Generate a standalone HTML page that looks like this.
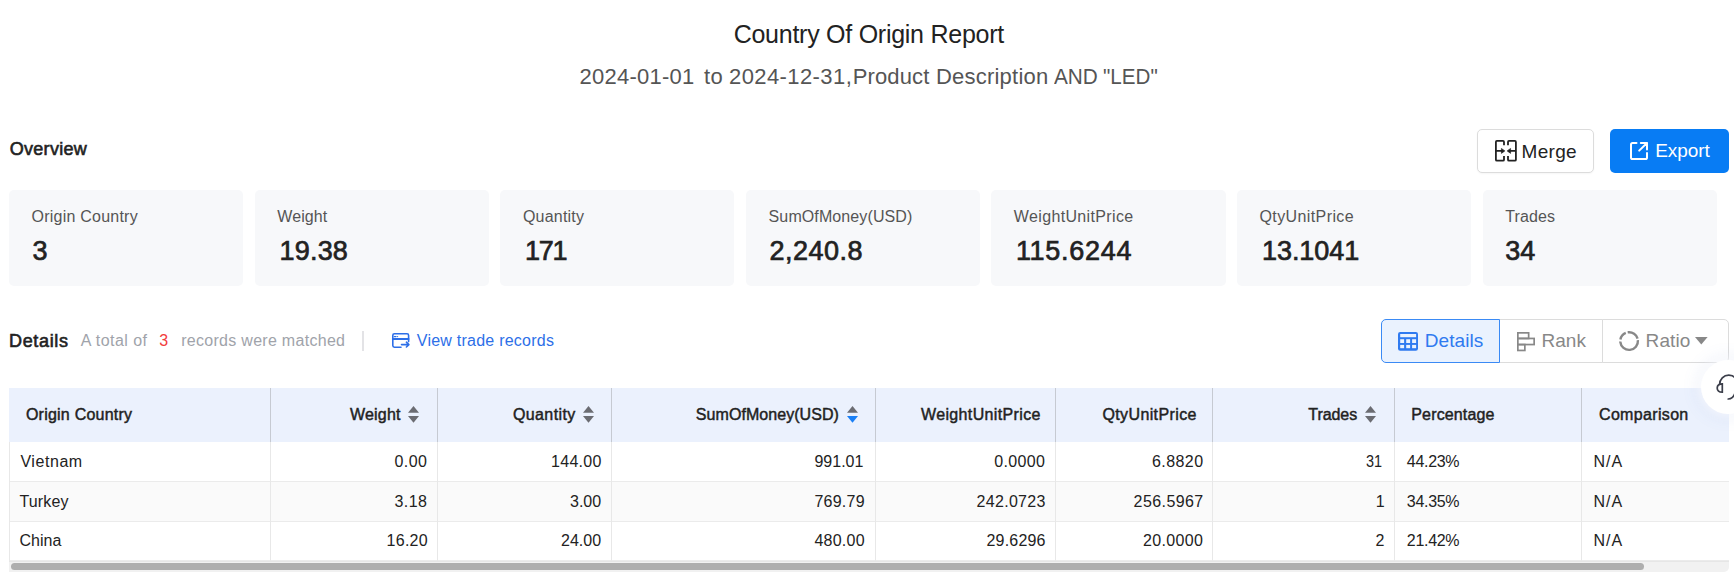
<!DOCTYPE html>
<html><head><meta charset="utf-8">
<style>
*{box-sizing:border-box;margin:0;padding:0}
html,body{width:1734px;height:585px;overflow:hidden;background:#fff;font-family:"Liberation Sans",sans-serif;color:#222}
.a{position:absolute;white-space:nowrap}
.tt{font-size:25px;line-height:28px;color:#222}
.sb{font-size:22px;line-height:28px;color:#555}
.ov{font-size:18px;font-weight:normal;line-height:22px;color:#222;-webkit-text-stroke:0.6px #222}
.btn{position:absolute;top:129px;height:44px;border-radius:5px;font-size:19px;line-height:44px}
#merge{left:1477px;width:117px;border:1px solid #dcdcdc;background:#fff;color:#222;box-shadow:0 1px 2px rgba(0,0,0,.04)}
#export{left:1610px;width:119px;background:#087cf4;color:#fff}
.card{position:absolute;top:190px;height:96px;width:234.3px;background:#f7f8fa;border-radius:5px}
.lb{font-size:16px;line-height:20px;color:#555}
.vl{font-size:27px;line-height:30px;font-weight:normal;color:#222;-webkit-text-stroke:0.7px #222}
.tot{font-size:16px;line-height:22px;color:#a0a3aa}
.seg{position:absolute;top:319px;height:44px;border:1px solid #dcdcdc;background:#fff;color:#888}
.sgt{font-size:19px;line-height:42px}
#sd{left:1381px;width:119px;border-color:#3a8af5;background:#eaf2fe;color:#2f7af0;border-radius:5px 0 0 5px;z-index:2}
#sr{left:1499px;width:104px}
#sq{left:1602px;width:127px;border-radius:0 5px 5px 0}
#tbl{position:absolute;left:9px;top:388px;width:1720px;height:184px;overflow:hidden}
.hd{position:absolute;left:0;top:0;height:54.5px;width:1720px;background:#ebf1fd}
.row{position:absolute;left:0;width:1720px;border-bottom:1px solid #ebebeb;background:#fff}
.vl2{position:absolute;width:1px;background:#e8e8e8}
.ht{font-size:16px;font-weight:normal;line-height:54px;color:#222;-webkit-text-stroke:0.45px #222}
.si{position:absolute;top:18px}
.ct{font-size:16px;line-height:39px;color:#222}
#track{position:absolute;left:0;top:173px;width:1720px;height:11px;background:#f1f1f1;border-top:1px solid #e6e6e6;border-radius:0 0 5px 0}
#thumb{position:absolute;left:2px;top:175px;width:1633px;height:7px;background:#aeaeae;border-radius:4px}
#fab{left:1701px;top:360px;width:54px;height:54px;border-radius:50%;background:#fff;box-shadow:0 0 8px 3px rgba(255,255,255,.6),0 0 18px 2px rgba(90,120,210,.13)}
svg{position:absolute;overflow:visible}
</style></head><body>
<span id="t1" class="a tt" style="left:733.7px;top:19.5px;letter-spacing:-0.261px">Country Of Origin Report</span>
<span id="t2" class="a sb" style="left:579.4px;top:63px;letter-spacing:0.264px">2024-01-01</span>
<span id="t3" class="a sb" style="left:704.0px;top:63px;letter-spacing:0.4px">to</span>
<span id="t4" class="a sb" style="left:729.0px;top:63px;letter-spacing:0.41px">2024-12-31,</span>
<span id="t5" class="a sb" style="left:852.7px;top:63px;letter-spacing:0.122px">Product</span>
<span id="t6" class="a sb" style="left:935.9px;top:63px;letter-spacing:0.23px">Description</span>
<span id="t7" class="a sb" style="left:1054.2px;top:63px;letter-spacing:0px;transform:scaleX(0.9444);transform-origin:0 0">AND</span>
<span id="t8" class="a sb" style="left:1103.0px;top:63px;letter-spacing:0px;transform:scaleX(0.9365);transform-origin:0 0">"LED"</span>
<span id="t9" class="a ov" style="left:9.8px;top:138px;letter-spacing:0.27px">Overview</span>
<div id="merge" class="btn"><svg style="left:17px;top:10px" width="22" height="22" viewBox="0 0 22 22" fill="none" stroke="#222" stroke-width="1.8" stroke-linejoin="round"><path d="M9 5.3V1.9Q9 0.9 8 0.9H1.9Q0.9 0.9 0.9 1.9V19.7Q0.9 20.7 1.9 20.7H8Q9 20.7 9 19.7V16.1"/><path d="M13 5.3V1.9Q13 0.9 14 0.9H19.9Q20.9 0.9 20.9 1.9V19.7Q20.9 20.7 19.9 20.7H14Q13 20.7 13 19.7V16.1"/><path d="M0.9 10.9H7M20.9 10.9H15"/><path d="M9.9 10.9L6.4 8.4V13.4Z M12.1 10.9L15.6 8.4V13.4Z" fill="#222" stroke-width="0.6"/></svg><span id="t10" class="a " style="left:43.6px;top:-0.5px;letter-spacing:0.275px">Merge</span></div>
<div id="export" class="btn"><svg style="left:20px;top:13px" width="18" height="18" viewBox="0 0 18 18" fill="none" stroke="#fff" stroke-width="2" stroke-linecap="round" stroke-linejoin="round"><path d="M6.5 1H2.6Q1 1 1 2.6V15.4Q1 17 2.6 17H15.4Q17 17 17 15.4V11"/><path d="M9.2 8.6L17 1M10.8 1H17V7.5"/></svg><span id="t11" class="a " style="left:45.3px;top:0px;letter-spacing:-0.1px">Export</span></div>
<div class="card" style="left:9.0px"></div>
<span id="t12" class="a lb" style="left:31.6px;top:207px;letter-spacing:0.225px">Origin Country</span>
<span id="t13" class="a vl" style="left:32.6px;top:236px;letter-spacing:0px">3</span>
<div class="card" style="left:254.6px"></div>
<span id="t14" class="a lb" style="left:277.31px;top:207px;letter-spacing:0.1px">Weight</span>
<span id="t15" class="a vl" style="left:279.5px;top:236px;letter-spacing:0.2px">19.38</span>
<div class="card" style="left:500.2px"></div>
<span id="t16" class="a lb" style="left:522.9px;top:207px;letter-spacing:0.222px">Quantity</span>
<span id="t17" class="a vl" style="left:524.9px;top:236px;letter-spacing:-1.2px">171</span>
<div class="card" style="left:745.8px"></div>
<span id="t18" class="a lb" style="left:768.6px;top:207px;letter-spacing:0.107px">SumOfMoney(USD)</span>
<span id="t19" class="a vl" style="left:769.5px;top:236px;letter-spacing:0.47px">2,240.8</span>
<div class="card" style="left:991.4px"></div>
<span id="t20" class="a lb" style="left:1013.8px;top:207px;letter-spacing:0.355px">WeightUnitPrice</span>
<span id="t21" class="a vl" style="left:1015.9px;top:236px;letter-spacing:0.714px">115.6244</span>
<div class="card" style="left:1237.0px"></div>
<span id="t22" class="a lb" style="left:1259.5px;top:207px;letter-spacing:0.397px">QtyUnitPrice</span>
<span id="t23" class="a vl" style="left:1262.0px;top:236px;letter-spacing:-0.063px">13.1041</span>
<div class="card" style="left:1482.6px"></div>
<span id="t24" class="a lb" style="left:1505.2px;top:207px;letter-spacing:0.14px">Trades</span>
<span id="t25" class="a vl" style="left:1505.3px;top:236px;letter-spacing:-0.1px">34</span>
<span id="t26" class="a ov" style="left:9.0px;top:330px;letter-spacing:0.667px">Details</span>
<span id="t27" class="a tot" style="left:80.7px;top:330px;letter-spacing:0.451px">A total of</span>
<span id="t28" class="a tot" style="left:159.31px;top:330px;letter-spacing:0px;color:#f23c3c">3</span>
<span id="t29" class="a tot" style="left:181.21px;top:330px;letter-spacing:0.288px">records were matched</span>
<div class="a" style="left:362px;top:331px;width:2px;height:20px;background:#e3e3e6"></div>
<svg style="left:392px;top:333px" width="18" height="15" viewBox="0 0 18 15" fill="none" stroke="#2d6fe8" stroke-width="1.6" stroke-linecap="round" stroke-linejoin="round"><path d="M16.6 8.6V2.4Q16.6 0.8 15 0.8H2.4Q0.8 0.8 0.8 2.4V12.6Q0.8 14.2 2.4 14.2H9"/><path d="M0.8 6H16.6" stroke-width="1.8"/><path d="M2.3 3.6H4.1" stroke-width="1.1"/><circle cx="5.6" cy="3.6" r="0.65" fill="#2d6fe8" stroke="none"/><path d="M9.5 11.6H16.9M14.4 9.2L16.9 11.6L14.4 14"/></svg>
<span id="t30" class="a tot" style="left:416.81px;top:330px;letter-spacing:0.235px;color:#2d6fe8">View trade records</span>
<div id="sd" class="seg"><svg style="left:16px;top:12px" width="20" height="19" viewBox="0 0 20 19"><rect x="0" y="0" width="20" height="18.7" rx="2.2" fill="#2f7af0"/><g fill="#eaf2fe"><rect x="2.2" y="2" width="15.9" height="3.2"/><rect x="2.2" y="7.2" width="3.9" height="3.8"/><rect x="8.2" y="7.2" width="3.9" height="3.8"/><rect x="14.1" y="7.2" width="4" height="3.8"/><rect x="2.2" y="12.9" width="3.9" height="3.3"/><rect x="8.2" y="12.9" width="3.9" height="3.3"/><rect x="14.1" y="12.9" width="4" height="3.3"/></g></svg><span id="t31" class="a sgt" style="left:42.8px;top:0px;letter-spacing:0.064px">Details</span></div>
<div id="sr" class="seg"><svg style="left:17px;top:11.5px" width="19" height="20" viewBox="0 0 19 20" fill="none" stroke="#888" stroke-width="1.7"><rect x="0.85" y="0.85" width="10.8" height="5.6"/><rect x="0.85" y="6.45" width="16.3" height="6.1"/><rect x="0.85" y="12.55" width="7" height="5.9"/></svg><span id="t32" class="a sgt" style="left:41.4px;top:0px;letter-spacing:0.07px">Rank</span></div>
<div id="sq" class="seg"><svg style="left:16px;top:11px" width="21" height="21" viewBox="0 0 21 21" fill="none" stroke="#888" stroke-width="2.4"><circle cx="10.1" cy="10.05" r="8.85" stroke-dasharray="28.11 2 8.73 2 12.74 2" transform="rotate(-5.5 10.1 10.05)"/></svg><span id="t33" class="a sgt" style="left:42.6px;top:0px;letter-spacing:0.075px">Ratio</span><svg style="left:92px;top:17px" width="13" height="8" viewBox="0 0 13 8"><path d="M0 0H12.6L6.3 7.5Z" fill="#888"/></svg></div>
<div id="tbl">
 <div class="hd"></div>
 <div class="row" style="top:54px;height:40px"></div>
 <div class="row" style="top:94px;height:40px;background:#fafafa"></div>
 <div class="row" style="top:134px;height:39px"></div>
 <div class="vl2" style="left:261px;top:0;height:54px;background:#c6cad2"></div>
 <div class="vl2" style="left:261px;top:54px;height:119px"></div>
 <div class="vl2" style="left:428px;top:0;height:54px;background:#c6cad2"></div>
 <div class="vl2" style="left:428px;top:54px;height:119px"></div>
 <div class="vl2" style="left:602px;top:0;height:54px;background:#c6cad2"></div>
 <div class="vl2" style="left:602px;top:54px;height:119px"></div>
 <div class="vl2" style="left:866px;top:0;height:54px;background:#c6cad2"></div>
 <div class="vl2" style="left:866px;top:54px;height:119px"></div>
 <div class="vl2" style="left:1046px;top:0;height:54px;background:#c6cad2"></div>
 <div class="vl2" style="left:1046px;top:54px;height:119px"></div>
 <div class="vl2" style="left:1203px;top:0;height:54px;background:#c6cad2"></div>
 <div class="vl2" style="left:1203px;top:54px;height:119px"></div>
 <div class="vl2" style="left:1385px;top:0;height:54px;background:#c6cad2"></div>
 <div class="vl2" style="left:1385px;top:54px;height:119px"></div>
 <div class="vl2" style="left:1572px;top:0;height:54px;background:#c6cad2"></div>
 <div class="vl2" style="left:1572px;top:54px;height:119px"></div>
 <div class="vl2" style="left:0;top:54px;height:119px"></div>
 <span id="t34" class="a ht" style="left:16.9px;top:-0.4px;letter-spacing:0.237px">Origin Country</span>
 <span id="t35" class="a ht" style="left:340.9px;top:-0.4px;letter-spacing:0.22px">Weight</span>
 <span id="t36" class="a ht" style="left:503.9px;top:-0.4px;letter-spacing:0.412px">Quantity</span>
 <span id="t37" class="a ht" style="left:686.8px;top:-0.4px;letter-spacing:0.06px">SumOfMoney(USD)</span>
 <span id="t38" class="a ht" style="left:912.0px;top:-0.4px;letter-spacing:0.357px">WeightUnitPrice</span>
 <span id="t39" class="a ht" style="left:1093.4px;top:-0.4px;letter-spacing:0.388px">QtyUnitPrice</span>
 <span id="t40" class="a ht" style="left:1299.3px;top:-0.4px;letter-spacing:-0.06px">Trades</span>
 <span id="t41" class="a ht" style="left:1402.3px;top:-0.4px;letter-spacing:0.146px">Percentage</span>
 <span id="t42" class="a ht" style="left:1590.0px;top:-0.4px;letter-spacing:0.334px">Comparison</span>
 <svg class="si" style="left:399px" width="11" height="17" viewBox="0 0 11 17"><path d="M5.5 0L11 6.8H0Z" fill="#6b6c72"/><path d="M0 10H11L5.5 16.7Z" fill="#6b6c72"/></svg>
 <svg class="si" style="left:574px" width="11" height="17" viewBox="0 0 11 17"><path d="M5.5 0L11 6.8H0Z" fill="#6b6c72"/><path d="M0 10H11L5.5 16.7Z" fill="#6b6c72"/></svg>
 <svg class="si" style="left:838px" width="11" height="17" viewBox="0 0 11 17"><path d="M5.5 0L11 6.8H0Z" fill="#6b6c72"/><path d="M0 10H11L5.5 16.7Z" fill="#1a7ff5"/></svg>
 <svg class="si" style="left:1356px" width="11" height="17" viewBox="0 0 11 17"><path d="M5.5 0L11 6.8H0Z" fill="#6b6c72"/><path d="M0 10H11L5.5 16.7Z" fill="#6b6c72"/></svg>
 <span id="t43" class="a ct" style="left:11.4px;top:53.6px;letter-spacing:0.563px">Vietnam</span>
 <span id="t44" class="a ct" style="left:385.4px;top:53.6px;letter-spacing:0.47px">0.00</span>
 <span id="t45" class="a ct" style="left:542.1px;top:53.6px;letter-spacing:0.26px">144.00</span>
 <span id="t46" class="a ct" style="left:805.4px;top:53.6px;letter-spacing:0.02px">991.01</span>
 <span id="t47" class="a ct" style="left:985.3px;top:53.6px;letter-spacing:0.32px">0.0000</span>
 <span id="t48" class="a ct" style="left:1143.0px;top:53.6px;letter-spacing:0.42px">6.8820</span>
 <span id="t49" class="a ct" style="left:1357.1px;top:53.6px;letter-spacing:0px;transform:scaleX(0.9018);transform-origin:0 0">31</span>
 <span id="t50" class="a ct" style="left:1397.8px;top:53.6px;letter-spacing:-0.3px">44.23%</span>
 <span id="t51" class="a ct" style="left:1584.6px;top:53.6px;letter-spacing:0.9px">N/A</span>
 <span id="t52" class="a ct" style="left:10.4px;top:93.6px;letter-spacing:0.16px">Turkey</span>
 <span id="t53" class="a ct" style="left:385.4px;top:93.6px;letter-spacing:0.47px">3.18</span>
 <span id="t54" class="a ct" style="left:561.0px;top:93.6px;letter-spacing:0.0px">3.00</span>
 <span id="t55" class="a ct" style="left:805.4px;top:93.6px;letter-spacing:0.24px">769.79</span>
 <span id="t56" class="a ct" style="left:967.5px;top:93.6px;letter-spacing:0.317px">242.0723</span>
 <span id="t57" class="a ct" style="left:1124.6px;top:93.6px;letter-spacing:0.413px">256.5967</span>
 <span id="t58" class="a ct" style="left:1366.8px;top:93.6px;letter-spacing:0px">1</span>
 <span id="t59" class="a ct" style="left:1397.8px;top:93.6px;letter-spacing:-0.3px">34.35%</span>
 <span id="t60" class="a ct" style="left:1584.6px;top:93.6px;letter-spacing:0.9px">N/A</span>
 <span id="t61" class="a ct" style="left:10.4px;top:133.4px;letter-spacing:0.05px">China</span>
 <span id="t62" class="a ct" style="left:377.6px;top:133.4px;letter-spacing:0.25px">16.20</span>
 <span id="t63" class="a ct" style="left:552.0px;top:133.4px;letter-spacing:0.0px">24.00</span>
 <span id="t64" class="a ct" style="left:805.4px;top:133.4px;letter-spacing:0.24px">480.00</span>
 <span id="t65" class="a ct" style="left:977.5px;top:133.4px;letter-spacing:0.197px">29.6296</span>
 <span id="t66" class="a ct" style="left:1134.0px;top:133.4px;letter-spacing:0.349px">20.0000</span>
 <span id="t67" class="a ct" style="left:1366.5px;top:133.4px;letter-spacing:0px">2</span>
 <span id="t68" class="a ct" style="left:1397.8px;top:133.4px;letter-spacing:-0.3px">21.42%</span>
 <span id="t69" class="a ct" style="left:1584.6px;top:133.4px;letter-spacing:0.9px">N/A</span>
 <div id="track"></div><div id="thumb"></div>
</div>
<div id="fab" class="a"><svg style="left:14px;top:14px" width="26" height="26" viewBox="0 0 26 26" fill="none" stroke="#3b3e4a" stroke-width="1.7" stroke-linecap="round"><path d="M4.6 10.5A9.2 9.4 0 0 1 23 10.5"/><path d="M7.3 9.8V18.2Q2.2 18.2 2.2 14Q2.2 9.8 7.3 9.8Z"/><path d="M20.3 9.8V18.2Q25.4 18.2 25.4 14Q25.4 9.8 20.3 9.8Z"/><path d="M13.2 25Q18 25 20.3 18.6"/></svg></div>
</body></html>
